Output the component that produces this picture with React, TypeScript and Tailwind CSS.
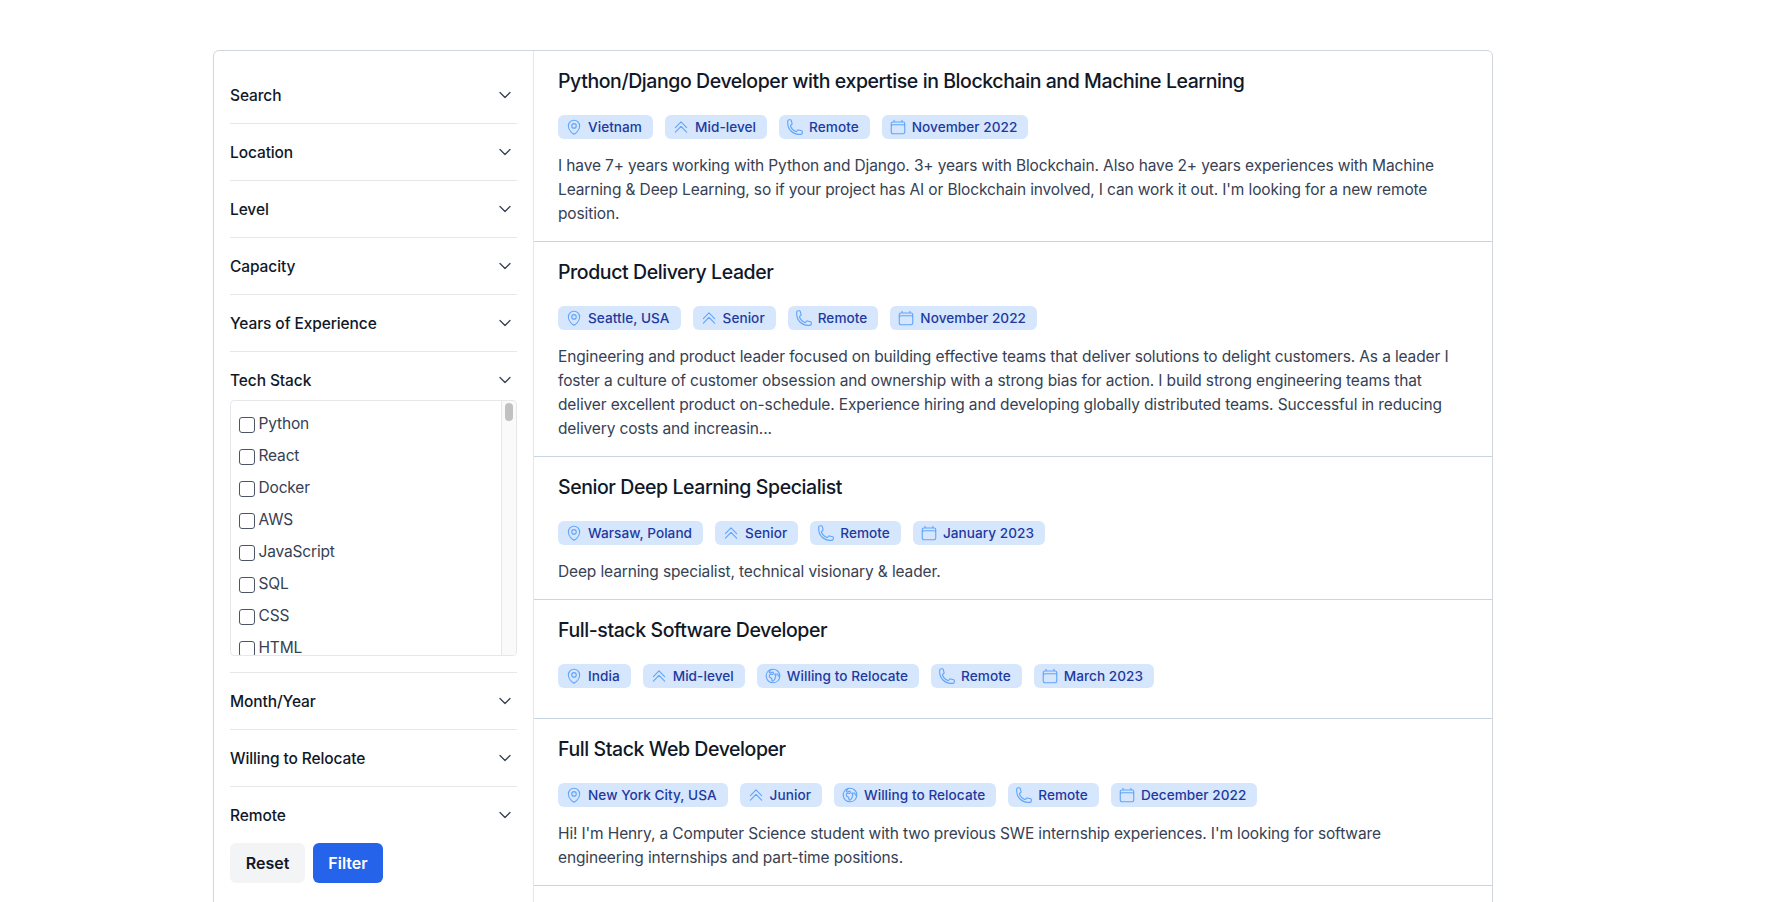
import { HiOutlineCalendar, HiOutlineChevronDoubleUp, HiOutlineGlobeEuropeAfrica, HiOutlineMapPin, HiOutlinePhone } from "react-icons/hi2";
import { ChevronDown } from "lucide-react";

const filters = ["Search", "Location", "Level", "Capacity", "Years of Experience", "Tech Stack", "Month/Year", "Willing to Relocate", "Remote"];
const techStack = ["Python", "React", "Docker", "AWS", "JavaScript", "SQL", "CSS", "HTML"];

type Job = {
    title: string;
    location: string;
    level: string;
    relocate?: boolean;
    date: string;
    description?: string[];
};

const jobs: Job[] = [
    {
        title: "Python/Django Developer with expertise in Blockchain and Machine Learning",
        location: "Vietnam",
        level: "Mid-level",
        date: "November 2022",
        description: [
            "I have 7+ years working with Python and Django. 3+ years with Blockchain. Also have 2+ years experiences with Machine",
            "Learning & Deep Learning, so if your project has AI or Blockchain involved, I can work it out. I'm looking for a new remote",
            "position.",
        ],
    },
    {
        title: "Product Delivery Leader",
        location: "Seattle, USA",
        level: "Senior",
        date: "November 2022",
        description: [
            "Engineering and product leader focused on building effective teams that deliver solutions to delight customers. As a leader I",
            "foster a culture of customer obsession and ownership with a strong bias for action. I build strong engineering teams that",
            "deliver excellent product on-schedule. Experience hiring and developing globally distributed teams. Successful in reducing",
            "delivery costs and increasin...",
        ],
    },
    {
        title: "Senior Deep Learning Specialist",
        location: "Warsaw, Poland",
        level: "Senior",
        date: "January 2023",
        description: ["Deep learning specialist, technical visionary & leader."],
    },
    {
        title: "Full-stack Software Developer",
        location: "India",
        level: "Mid-level",
        relocate: true,
        date: "March 2023",
    },
    {
        title: "Full Stack Web Developer",
        location: "New York City, USA",
        level: "Junior",
        relocate: true,
        date: "December 2022",
        description: [
            "Hi! I'm Henry, a Computer Science student with two previous SWE internship experiences. I'm looking for software",
            "engineering internships and part-time positions.",
        ],
    },
];

function Tag({ icon, label }: { icon: React.ReactNode; label: string }) {
    return (
        <span className="flex h-6 items-center gap-[5px] rounded-md bg-[#d6e6fd] pl-[7px] pr-[11px] text-[13.6px] font-medium tracking-[0.05px] text-[#1e3a9f]">
            <span className="text-[18px] text-[#60a5fa]">{icon}</span>
            {label}
        </span>
    );
}

function TechStackList() {
    return (
        <div className="-mt-2 mb-4 flex h-64 overflow-hidden rounded border border-gray-200">
            <div className="flex-1 overflow-hidden pl-2 pt-1.5">
                {techStack.map((tech) => (
                    <label key={tech} className="flex h-8 items-center gap-[3.5px] text-[15.5px] tracking-[-0.16px] text-gray-700">
                        <span className="mt-1 h-4 w-4 shrink-0 rounded-[3px] border border-gray-600 bg-white" />
                        <span className="mt-0.5">{tech}</span>
                    </label>
                ))}
            </div>
            <div className="w-[15px] border-l border-gray-200 bg-[#fafafa] px-[3px] pt-0.5">
                <div className="h-[18px] rounded-full bg-[#c1c1c1]" />
            </div>
        </div>
    );
}

function FilterRow({ name, last }: { name: string; last: boolean }) {
    return (
        <div className={last ? "" : "border-b border-gray-200"}>
            <div className="flex h-14 items-center justify-between text-[15.5px] font-medium tracking-[-0.1px] text-gray-900">
                <span className="mt-0.5">{name}</span>
                <ChevronDown className="mr-0.5 h-5 w-5 text-gray-700" strokeWidth={1.5} />
            </div>
            {name === "Tech Stack" && <TechStackList />}
        </div>
    );
}

function JobCard({ job }: { job: Job }) {
    return (
        <div className="border-b border-slate-300 px-6 pb-4 pt-4">
            <h3 className="mb-5 text-[19.5px] font-medium leading-7 tracking-[-0.42px] text-gray-900">{job.title}</h3>
            <div className="mb-3.5 flex gap-3">
                <Tag icon={<HiOutlineMapPin />} label={job.location} />
                <Tag icon={<HiOutlineChevronDoubleUp />} label={job.level} />
                {job.relocate && <Tag icon={<HiOutlineGlobeEuropeAfrica />} label="Willing to Relocate" />}
                <Tag icon={<HiOutlinePhone />} label="Remote" />
                <Tag icon={<HiOutlineCalendar />} label={job.date} />
            </div>
            {job.description && (
                <p className="-mb-px pt-px text-[15.5px] leading-6 tracking-[-0.13px] text-gray-700">
                    {job.description.map((line) => (
                        <span key={line} className="block whitespace-nowrap">{line}</span>
                    ))}
                </p>
            )}
        </div>
    );
}

export default function App() {
    return (
        <div className="h-[902px] overflow-hidden bg-white pt-[50px] font-['Inter',sans-serif]">
            <div className="ml-[213px] flex w-[1280px] rounded-t-md border border-gray-300">
                <aside className="w-[320px] shrink-0 border-r border-gray-200 px-4 pb-6 pt-4">
                    {filters.map((name, i) => (
                        <FilterRow key={name} name={name} last={i === filters.length - 1} />
                    ))}
                    <div className="flex gap-2">
                        <button className="h-10 w-[75px] rounded-md bg-gray-100 text-base font-semibold text-gray-900">Reset</button>
                        <button className="h-10 w-[70px] rounded-md bg-[#2563eb] text-base font-semibold text-white">Filter</button>
                    </div>
                </aside>
                <main className="min-w-0 flex-1">
                    {jobs.map((job) => (
                        <JobCard key={job.title} job={job} />
                    ))}
                </main>
            </div>
        </div>
    );
}
